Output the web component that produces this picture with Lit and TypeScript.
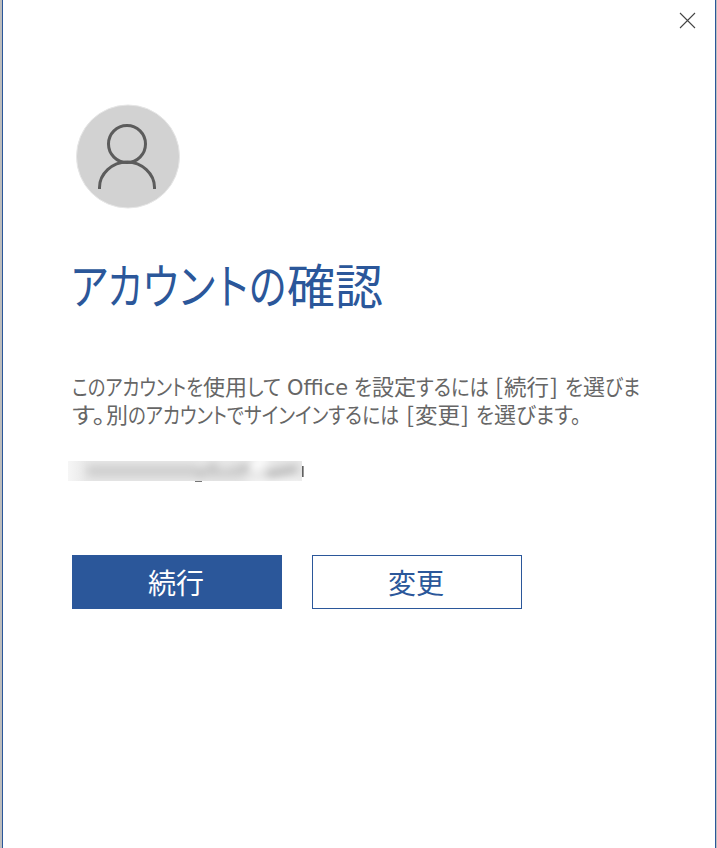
import { css, html, svg, LitElement } from 'lit';
import { customElement, property } from 'lit/decorators.js';

// [text, left edge, width of the run]
type Run = [string, number, number];

const TITLE: Run[] = [
  ['ア', -1, 37],
  ['カ', 36, 34],
  ['ウ', 71, 35],
  ['ン', 107, 36],
  ['ト', 146, 30],
  ['の', 177, 37],
  ['確認', 215, 96],
];

const LINE_ONE: Run[] = [
  ['このアカウントを', 0, 131],
  ['使用', 131, 44],
  ['して', 175, 34],
  ['Office', 215, 61],
  ['を', 282, 18],
  ['設定', 300, 44],
  ['するには', 344, 73],
  ['[', 423, 8],
  ['続行', 432, 45],
  [']', 478, 8],
  ['を', 493, 18],
  ['選', 511, 22],
  ['びま', 533, 35],
];

const LINE_TWO: Run[] = [
  ['す。', 0, 33],
  ['別', 34, 22],
  ['のアカウントで', 56, 116],
  ['サインインするには', 172, 155],
  ['[', 334, 8],
  ['変更', 343, 45],
  [']', 389, 8],
  ['を', 404, 18],
  ['選', 422, 22],
  ['びます。', 444, 65],
];

@customElement('ui-text')
export class UiText extends LitElement {
  @property({ type: Array }) runs: Run[] = [];

  @property({ type: Number }) baseline = 20;

  static styles = css`
    :host {
      display: block;
    }
    svg {
      display: block;
      width: 100%;
      height: 100%;
      overflow: visible;
      fill: currentColor;
      font-feature-settings: 'palt';
    }
    .latin {
      font-family: 'DejaVu Sans', sans-serif;
      font-size: 0.93em;
    }
  `;

  render() {
    return html`
      <svg>
        ${this.runs.map(
          ([text, x, width]) => svg`<text
            class=${/^[A-Za-z]/.test(text) ? 'latin' : ''}
            x=${x}
            y=${this.baseline}
            textLength=${width}
            lengthAdjust="spacingAndGlyphs"
          >${text}</text>`
        )}
      </svg>
    `;
  }
}

@customElement('app-root')
export class AppRoot extends LitElement {
  static styles = css`
    :host {
      display: block;
      box-sizing: border-box;
      width: 100%;
      height: 100vh;
      padding: 0 1px 0 2px;
      background: #bdbdbd;
      font-family: 'Noto Sans CJK JP', sans-serif;
    }
    .dialog {
      box-sizing: border-box;
      height: 100%;
      display: flex;
      flex-direction: column;
      align-items: flex-start;
      border-left: 1px solid #2b579a;
      border-right: 1px solid #2b579a;
      padding: 12px 19px 0 69px;
      background: #fff;
    }
    .close {
      align-self: flex-end;
      width: 17px;
      height: 17px;
      padding: 0;
      border: none;
      background: none;
    }
    .close svg,
    .avatar {
      display: block;
    }
    .avatar {
      width: 106px;
      height: 106px;
      margin: 74px 0 0 3px;
    }
    .title {
      width: 312px;
      height: 60px;
      margin: 49px 0 0;
      color: #2b579a;
      font-size: 48px;
      font-weight: 400;
    }
    .title ui-text {
      height: 60px;
    }
    .message {
      width: 580px;
      margin: 56px 0 0;
      color: #666;
      font-size: 22px;
    }
    .message ui-text {
      height: 28px;
    }
    .account {
      display: flex;
      position: relative;
      margin: 31px 0 0 -4px;
      width: 237px;
      height: 21px;
    }
    .smear {
      width: 234px;
      height: 20px;
      overflow: hidden;
      background: linear-gradient(90deg, #f6f6f6, #e8e8e8 8%, #e8e8e8);
    }
    .smear svg {
      display: block;
    }
    .tail {
      position: absolute;
      left: 234px;
      top: 5px;
      width: 2px;
      height: 11px;
      background: linear-gradient(90deg, #606060 50%, #999 50%);
    }
    .descender {
      position: absolute;
      left: 127px;
      top: 20px;
      width: 7px;
      height: 1px;
      background: #777;
    }
    .actions {
      display: flex;
      gap: 30px;
      margin-top: 73px;
    }
    .actions button {
      box-sizing: border-box;
      width: 210px;
      height: 54px;
      padding: 0 2px 0 0;
      border: 1px solid #2b579a;
      background: #fff;
      color: #2b579a;
      font: 28px/52px 'Noto Sans CJK JP', sans-serif;
    }
    .actions .primary {
      background: #2b579a;
      color: #fff;
    }
  `;

  render() {
    return html`
      <div class="dialog">
        <button class="close" aria-label="閉じる">
          <svg width="17" height="17" stroke="#444" stroke-width="1.1">
            <path d="M1 1L16 16M16 1L1 16" />
          </svg>
        </button>

        <svg class="avatar" viewBox="0 0 106 106" fill="none">
          <circle cx="53" cy="53.5" r="51.5" fill="#d2d2d2" stroke="#e6e6e6" />
          <g stroke="#5c5c5c" stroke-width="3">
            <circle cx="52" cy="41" r="18.500" />
            <path d="M24.5 86V84.500C24.500 71 37 59 52 59S79.500 71 79.500 84.500V86" />
          </g>
        </svg>

        <h1 class="title" aria-label="アカウントの確認">
          <ui-text .runs=${TITLE} .baseline=${46}></ui-text>
        </h1>

        <div class="message">
          <ui-text .runs=${LINE_ONE} .baseline=${21}></ui-text>
          <ui-text .runs=${LINE_TWO} .baseline=${21}></ui-text>
        </div>

        <div class="account">
          <div class="smear">
            <svg width="234" height="20">
              <defs>
                <filter id="soft" filterUnits="userSpaceOnUse" x="-20" y="-20" width="280" height="60">
                  <feGaussianBlur stdDeviation="4.5" />
                </filter>
              </defs>
              <g filter="url(#soft)" fill="none" stroke-linecap="round">
                <path d="M24 10H126" stroke="#cfcfcf" stroke-width="12" />
                <path d="M132 13L146 6M158 12L184 6" stroke="#bebebe" stroke-width="8" />
                <path d="M138 12H172" stroke="#cecece" stroke-width="9" />
                <path d="M202 13L226 8" stroke="#bcbcbc" stroke-width="8" />
                <path d="M186 6L196 -2" stroke="#fff" stroke-width="9" />
                <path d="M184 24H234" stroke="#fff" stroke-width="6" />
              </g>
            </svg>
          </div>
          <span class="tail"></span>
          <span class="descender"></span>
        </div>

        <div class="actions">
          <button class="primary">続行</button>
          <button>変更</button>
        </div>
      </div>
    `;
  }
}
